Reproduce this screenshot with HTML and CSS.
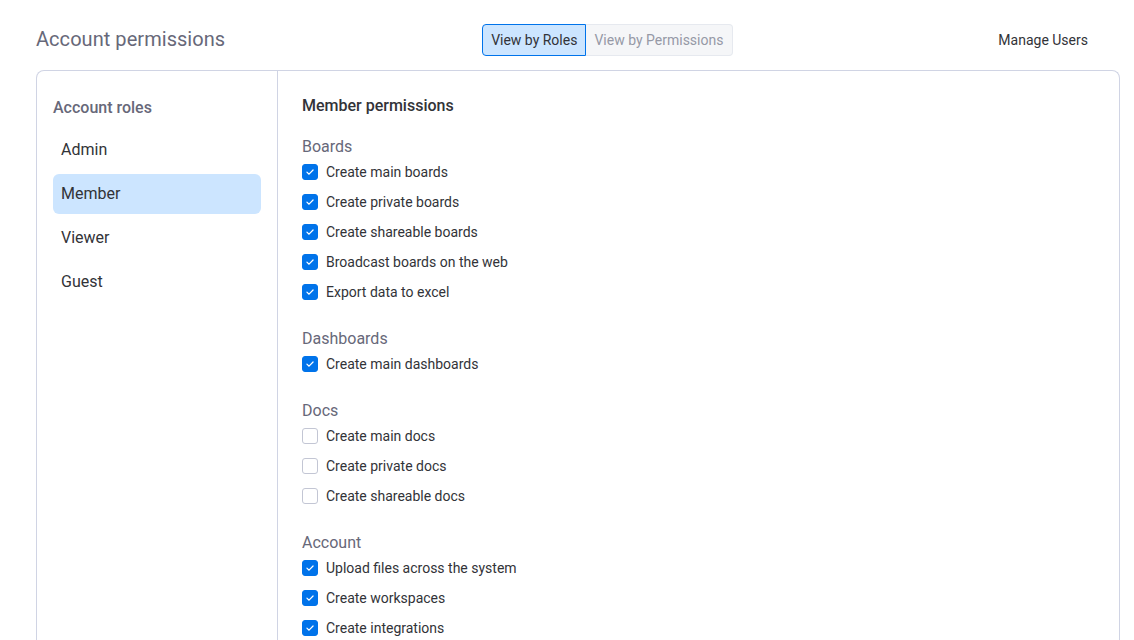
FILE: index.html
```html
<!DOCTYPE html>
<html>
<head>
<meta charset="utf-8">
<link rel="stylesheet" href="styles.css">
</head>
<body>
<div class="page">
  <header class="header">
    <h1 class="title">Account permissions</h1>
    <div class="toggle">
      <button class="toggle-btn active">View by Roles</button>
      <button class="toggle-btn">View by Permissions</button>
    </div>
    <button class="link-btn">Manage Users</button>
  </header>
  <div class="card">
    <aside class="roles">
      <div class="roles-title">Account roles</div>
      <div class="role">Admin</div>
      <div class="role selected">Member</div>
      <div class="role">Viewer</div>
      <div class="role">Guest</div>
    </aside>
    <main class="perms">
      <div class="perms-title">Member permissions</div>
      <section class="group">
        <div class="group-title">Boards</div>
        <label class="item"><span class="cb on"><svg viewBox="0 0 16 16"><path d="M4.5 8.2l2.4 2.3 4.6-4.8"/></svg></span>Create main boards</label>
        <label class="item"><span class="cb on"><svg viewBox="0 0 16 16"><path d="M4.5 8.2l2.4 2.3 4.6-4.8"/></svg></span>Create private boards</label>
        <label class="item"><span class="cb on"><svg viewBox="0 0 16 16"><path d="M4.5 8.2l2.4 2.3 4.6-4.8"/></svg></span>Create shareable boards</label>
        <label class="item"><span class="cb on"><svg viewBox="0 0 16 16"><path d="M4.5 8.2l2.4 2.3 4.6-4.8"/></svg></span>Broadcast boards on the web</label>
        <label class="item"><span class="cb on"><svg viewBox="0 0 16 16"><path d="M4.5 8.2l2.4 2.3 4.6-4.8"/></svg></span>Export data to excel</label>
      </section>
      <section class="group">
        <div class="group-title">Dashboards</div>
        <label class="item"><span class="cb on"><svg viewBox="0 0 16 16"><path d="M4.5 8.2l2.4 2.3 4.6-4.8"/></svg></span>Create main dashboards</label>
      </section>
      <section class="group">
        <div class="group-title">Docs</div>
        <label class="item"><span class="cb"></span>Create main docs</label>
        <label class="item"><span class="cb"></span>Create private docs</label>
        <label class="item"><span class="cb"></span>Create shareable docs</label>
      </section>
      <section class="group">
        <div class="group-title">Account</div>
        <label class="item"><span class="cb on"><svg viewBox="0 0 16 16"><path d="M4.5 8.2l2.4 2.3 4.6-4.8"/></svg></span>Upload files across the system</label>
        <label class="item"><span class="cb on"><svg viewBox="0 0 16 16"><path d="M4.5 8.2l2.4 2.3 4.6-4.8"/></svg></span>Create workspaces</label>
        <label class="item"><span class="cb on"><svg viewBox="0 0 16 16"><path d="M4.5 8.2l2.4 2.3 4.6-4.8"/></svg></span>Create integrations</label>
      </section>
    </main>
  </div>
</div>
</body>
</html>
```
FILE: styles.css
```css
* { box-sizing: border-box; }
html, body { margin: 0; padding: 0; background: #fff; overflow: hidden; }
body { font-family: Roboto, "Liberation Sans", sans-serif; color: #323338; }
.page { width: 1084px; margin-left: 36px; padding-top: 24px; height: 640px; display: flex; flex-direction: column; }
.header { display: flex; align-items: center; justify-content: space-between; height: 32px; padding-right: 24px; flex: none; }
.title { margin: 0; font-size: 20px; font-weight: 400; color: #676879; line-height: 30px; margin-top: -2px; letter-spacing: 0.05px; }
.toggle { display: flex; }
.toggle-btn { font-family: inherit; font-size: 14px; height: 32px; padding: 0 8px; border: 1px solid #e6e9ef; background: #f5f6f8; color: #9699a6; cursor: pointer; }
.toggle-btn:first-child { border-radius: 4px 0 0 4px; }
.toggle-btn:last-child { border-radius: 0 4px 4px 0; border-left: none; padding: 0 9px 0 8px; }
.toggle-btn.active { background: #cce5ff; border-color: #0073ea; color: #323338; }
.link-btn { font-family: inherit; font-size: 14px; background: none; border: none; color: #323338; padding: 0 8px; height: 32px; }
.card { margin-top: 14px; border: 1px solid #d0d4e4; border-bottom: none; border-radius: 8px 8px 0 0; display: flex; flex: 1; overflow: hidden; }
.roles { width: 241px; border-right: 1px solid #d0d4e4; padding: 26px 16px 0 16px; }
.roles-title { font-size: 16px; font-weight: 500; color: #676879; line-height: 22px; margin-bottom: 11px; }
.role { height: 40px; line-height: 40px; padding: 0 8px; font-size: 16px; color: #323338; border-radius: 6px; margin-bottom: 4px; }
.role.selected { background: #cce5ff; }
.perms { flex: 1; padding: 24px 24px 0 24px; }
.perms-title { font-size: 16px; font-weight: 500; color: #323338; line-height: 22px; margin-bottom: 19px; }
.group { margin-bottom: 21px; }
.group-title { font-size: 16px; color: #676879; line-height: 22px; margin-bottom: -1px; }
.item { display: flex; align-items: center; height: 30px; font-size: 14px; color: #323338; }
.cb { width: 16px; height: 16px; border: 1px solid #c3c6d4; border-radius: 3px; margin-right: 8px; display: inline-flex; flex: none; }
.cb.on { background: #0073ea; border-color: #0073ea; }
.cb svg { width: 14px; height: 14px; }
.cb path { fill: none; stroke: #fff; stroke-width: 1.4; stroke-linecap: round; stroke-linejoin: round; }
```
